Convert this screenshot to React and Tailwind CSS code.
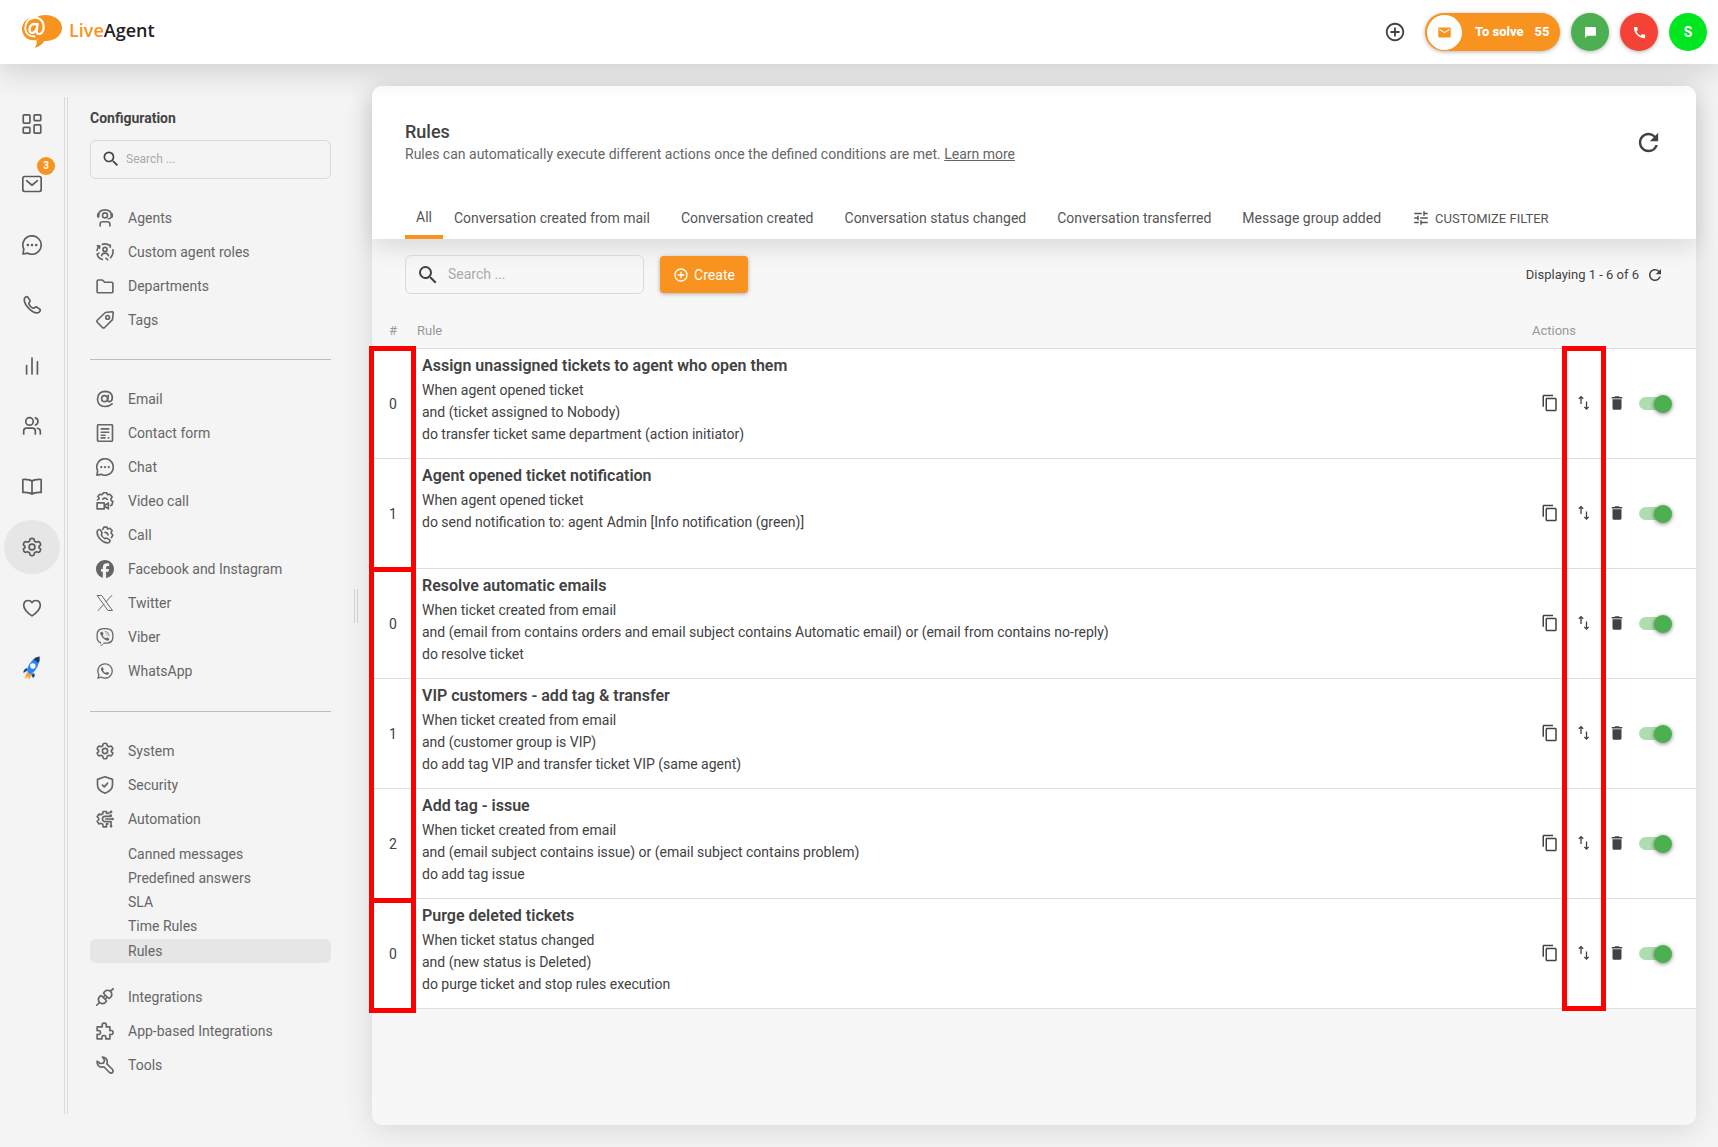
import React from 'react';
import { MdSearch, MdRefresh, MdTune, MdAddCircleOutline, MdContentCopy, MdDelete, MdEmail, MdChatBubble, MdCall } from 'react-icons/md';
import { FaFacebook, FaViber, FaWhatsapp } from 'react-icons/fa6';

const Svg = ({ size = 20, sw = 2, children }) => (
  <svg width={size} height={size} viewBox="0 0 24 24" fill="none" stroke="currentColor" strokeWidth={sw} strokeLinecap="round" strokeLinejoin="round" className="shrink-0" aria-hidden="true">
    {children}
  </svg>
);

const GEAR = 'M9.5 2.6Q12 .8 14.5 2.6L15 5 17.3 6.3 19.8 5.4Q22.3 6.6 22.4 9.4L20.4 11.2V12.8L22.4 14.6Q22.3 17.4 19.8 18.6L17.3 17.7 15 19 14.5 21.4Q12 23.2 9.5 21.4L9 19 6.7 17.7 4.2 18.6Q1.7 17.4 1.6 14.6L3.6 12.8V11.2L1.6 9.4Q1.7 6.6 4.2 5.4L6.7 6.3 9 5Z';

const Grid = (p) => (
  <Svg {...p}>
    <rect x="1.5" y="1" width="8" height="10" rx="1" />
    <rect x="14.5" y="1" width="8" height="7" rx="1" />
    <rect x="1.5" y="16" width="8" height="7" rx="1" />
    <rect x="14.5" y="13" width="8" height="10" rx="1" />
  </Svg>
);
const Mail = (p) => (
  <Svg {...p}>
    <rect x="1" y="3" width="22" height="18" rx="2" />
    <path d="M5.5 8L12 13.5 18.5 8" />
  </Svg>
);
const Chat = (p) => (
  <Svg {...p}>
    <path d="M1.2 22.8L2.2 17A11 11 0 1 1 7 21.8Z" />
    <path d="M7 12h.1M12 12h.1M17 12h.1" strokeWidth="3" />
  </Svg>
);
const Phone = (p) => (
  <Svg {...p}>
    <path d="M3.2 3.6Q5.2 1.2 7 2.6L9.6 6.6Q10 8 8.2 9.6 8 11.5 10.2 13.8 12.5 16 14.4 15.8 16 14 17.4 14.4L21.4 17Q22.8 18.8 20.4 20.8 16 23.4 9 17 1 9 3.2 3.6Z" />
  </Svg>
);
const Bars = (p) => (
  <Svg {...p}>
    <path d="M5.5 21.500V11.500M12 21.500V2.500M18.500 21.500V7" />
  </Svg>
);
const Users = (p) => (
  <Svg {...p}>
    <circle cx="9" cy="6.500" r="4.500" />
    <path d="M2 21.500V18Q2 14.500 5.500 14.500H12.500Q16 14.500 16 18V21.500M16 2.200A4.500 4.500 0 0 1 16 10.800M18.500 14.700Q22 15.200 22 18.500V21.500" />
  </Svg>
);
const Book = (p) => (
  <Svg {...p}>
    <path d="M12 5Q9 2.500 1 3V18.500Q9 18 12 20.500 15 18 23 18.500V3Q15 2.500 12 5V20.500" />
  </Svg>
);
const Gear = (p) => (
  <Svg {...p}>
    <path d={GEAR} />
    <circle cx="12" cy="12" r="3.500" />
  </Svg>
);
const Heart = (p) => (
  <Svg {...p}>
    <path d="M12 21.500Q2 15 2 8.500 2.500 3 7.500 3 10.500 3 12 5.500 13.500 3 16.500 3 21.500 3 22 8.500 22 15 12 21.500Z" />
  </Svg>
);
const Rocket = () => (
  <svg width="18" height="24" viewBox="0 0 18 24" aria-hidden="true">
    <path d="M3.500 12Q0 13.500 .5 17L4.500 14.500ZM11 17Q13 20 10 22L8 18.500Z" fill="#2b4a78" />
    <path d="M4 16L1.500 23 5 20.500 6 23.500 9 18Z" fill="#f9a13a" />
    <path d="M16.500 .5Q8 2 4 13L4.500 16 8 18.500Q16.500 12 16.500 .5Z" fill="#2684ff" />
    <path d="M16.500 .5Q13 1 10.500 3.500L16 7Q17 4 16.500 .5Z" fill="#253858" />
    <circle cx="9.800" cy="10" r="2.700" fill="#fff" />
  </svg>
);

const AgentIcon = (p) => (
  <Svg {...p}>
    <path d="M3 8.500Q4 1.200 12 1.200T21 8.500M5.500 22.500V20Q5.500 17 9 17H15Q18.500 17 18.500 20V22.500" />
    <path d="M3 7V10M21 7V10" strokeWidth="3.500" />
    <circle cx="12" cy="8.500" r="3.300" />
    <path d="M20.500 11Q19 13 16.500 13" />
  </Svg>
);
const RolesIcon = (p) => (
  <Svg {...p}>
    <circle cx="12" cy="8.500" r="2.700" />
    <path d="M7.500 17Q8 13.500 12 13.500T16.500 17M8.500 1.800Q14 0 18.500 3.500M22.500 9Q23.500 15 19.500 19.500M15.500 22.300L13.500 20.500M8.500 22Q3 20.500 1.500 15M1.300 10Q2 6 4.500 4M4.800 7V3.800H1.800M19 5.800V2.800M1.500 15L4 13.500" />
  </Svg>
);
const Folder = (p) => (
  <Svg {...p}>
    <path d="M1.500 5.500Q1.500 4 3 4H8.500L11.500 7H21Q22.500 7 22.500 8.500V19.500Q22.500 21 21 21H3Q1.500 21 1.500 19.500Z" />
  </Svg>
);
const Tag = (p) => (
  <Svg {...p}>
    <path d="M12.500 2L21.500 1Q23 1 23 2.500L22 11.500 11.500 22Q10 23.200 8.500 22L1.700 15Q.6 13.500 1.700 12.300Z" />
    <circle cx="15.500" cy="8.500" r="2.500" />
  </Svg>
);
const At = (p) => (
  <Svg {...p}>
    <circle cx="11.500" cy="11.500" r="4" />
    <path d="M16.500 7L15.500 13Q15.500 15.800 18 15.500 21.500 15 21.800 10.500 21.500 2 12.500 1.800 2.500 2 2 12 2 21.500 12 22 17.500 22 21.500 18.500" />
  </Svg>
);
const Form = (p) => (
  <Svg {...p}>
    <rect x="2" y="1" width="20" height="22" rx="1.500" />
    <path d="M7 6.500H17M7 11H17M7 15H12M7 18.500H12M16.500 18.500H17" />
  </Svg>
);
const VideoGear = (p) => (
  <Svg {...p}>
    <path d="M2 10.500L4 9.500V8L2.500 6 5 3 8 3.700 10 1H14L15.500 3.700 18.500 3 21.500 6.500 20 9V11L22.500 13 21 17.500 19.500 18M9 9.500Q12 6.500 15 10" />
    <path d="M1.500 14.500H11V22.500H1.500ZM11 18.500L16.500 14.500V22.500Z" />
  </Svg>
);
const CallGear = (p) => (
  <Svg {...p}>
    <path d="M2 6Q4.500 3.500 6 5.500L8 9Q8 10.500 7 11.500 8 15 12 17 13.500 15.500 15 16.500L18 18.500Q19.500 20 17.500 22 12 24 6 18 0 11.500 2 6Z" />
    <path d="M9 4.500L10.500 1.500H14.500L15.500 4 18.500 3 21.500 6 20 9 22.500 12.500 20.500 15.500M12 8.500Q15 8 16 12" />
  </Svg>
);
const XLogo = (p) => (
  <Svg {...p} sw={1.3}>
    <path d="M2 2H7.500L22 22H16.500ZM21 2L13.300 10.400M10.500 13.500L3 22" />
  </Svg>
);
const Shield = (p) => (
  <Svg {...p}>
    <path d="M12 1L22 4.500V12Q22 19.500 12 23 2 19.500 2 12V4.500ZM8.500 12L11 14.500 15.500 9.500" />
  </Svg>
);
const AutoIcon = (p) => (
  <Svg {...p}>
    <path d="M14 4.500V2H9.500L9 5 6.500 6.300 4 5.300 1.500 9 3.600 11V13L1.500 15 4 18.700 6.500 17.700 9 19 9.500 22.500H14V18.500H16M14 4.500H16.500L20 2.500M15 8.500H11Q8.500 9.500 8.500 12T11 15.500H15M13 12H22M15 8.500H19.500V7.500M15 15.500H20V21.500" />
    <path d="M20 2.500h.1M22 12h.1M20 21.500h.1M19.500 7.500h.1" strokeWidth="3.500" />
  </Svg>
);
const Plug = (p) => (
  <Svg {...p}>
    <path d="M1 23L5 19M4 18.500Q1.500 12.500 7 10L14 17Q11.500 22.500 5.500 20ZM23 1L19.500 4M10 7Q12.500 1.500 18 3.500L20.500 6Q22.500 11.500 17 14ZM9.500 12.500L12 10M12 15L14.500 12.500" />
  </Svg>
);
const Puzzle = (p) => (
  <Svg {...p}>
    <path d="M1.500 6.500H8.500Q7 1.500 11 1.500T13.500 6.500H18.500V11.500Q22.800 10.500 22.800 14T18.500 16.500V22.500H13Q14 18 10.500 18T8 22.500H1.500V16.500Q6 17.500 6 14T1.500 11.500Z" />
  </Svg>
);
const Wrench = (p) => (
  <Svg {...p}>
    <path d="M8.500 1.300L11.500 5.500 10 9.500 5.500 10 1.500 7Q1 12 4.500 14 7.500 15.500 10.500 14.300L18 22Q20 23.500 22 22 23.500 20 22 18L14.500 10.500Q16 6.500 13.500 3.500 11.500 1.200 8.500 1.300Z" />
  </Svg>
);

const SwapIcon = () => (
  <svg width="12" height="16" viewBox="0 0 12 16" fill="none" stroke="currentColor" strokeWidth="1.300" aria-hidden="true">
    <path d="M3 9V2M.8 3.800L3 1.600 5.200 3.800M8.500 6.500V14M6.300 11.900L8.500 14.100 10.700 11.900" />
  </svg>
);

const rail = [
  ['Dashboard', Grid],
  ['Tickets', Mail],
  ['Chats', Chat],
  ['Calls', Phone],
  ['Reports', Bars],
  ['Customers', Users],
  ['Knowledge base', Book],
  ['Configuration', Gear],
  ['Favourites', Heart],
  ['Getting started', Rocket],
];

const menu = [
  [
    ['Agents', AgentIcon],
    ['Custom agent roles', RolesIcon],
    ['Departments', Folder],
    ['Tags', Tag],
  ],
  [
    ['Email', At],
    ['Contact form', Form],
    ['Chat', Chat],
    ['Video call', VideoGear],
    ['Call', CallGear],
    ['Facebook and Instagram', FaFacebook],
    ['Twitter', XLogo],
    ['Viber', FaViber],
    ['WhatsApp', FaWhatsapp],
  ],
  [
    ['System', Gear],
    ['Security', Shield],
    ['Automation', AutoIcon, ['Canned messages', 'Predefined answers', 'SLA', 'Time Rules', 'Rules']],
    ['Integrations', Plug],
    ['App-based Integrations', Puzzle],
    ['Tools', Wrench],
  ],
];

const tabs = ['Conversation created from mail', 'Conversation created', 'Conversation status changed', 'Conversation transferred', 'Message group added'];

const rules = [
  [0, 'Assign unassigned tickets to agent who open them', ['When agent opened ticket', 'and (ticket assigned to Nobody)', 'do transfer ticket same department (action initiator)']],
  [1, 'Agent opened ticket notification', ['When agent opened ticket', 'do send notification to: agent Admin [Info notification (green)]']],
  [0, 'Resolve automatic emails', ['When ticket created from email', 'and (email from contains orders and email subject contains Automatic email) or (email from contains no-reply)', 'do resolve ticket']],
  [1, 'VIP customers - add tag & transfer', ['When ticket created from email', 'and (customer group is VIP)', 'do add tag VIP and transfer ticket VIP (same agent)']],
  [2, 'Add tag - issue', ['When ticket created from email', 'and (email subject contains issue) or (email subject contains problem)', 'do add tag issue']],
  [0, 'Purge deleted tickets', ['When ticket status changed', 'and (new status is Deleted)', 'do purge ticket and stop rules execution']],
];

function Logo() {
  return (
    <a href="#" className="flex items-center gap-[7px]" aria-label="LiveAgent">
      <svg width="40" height="34" viewBox="0 0 40 34" aria-hidden="true">
        <ellipse cx="23.500" cy="13" rx="16.500" ry="13" fill="#f7931e" />
        <circle cx="11.300" cy="14" r="11.300" fill="#f7931e" />
        <path d="M14 24L23 25Q20 31 12.500 33 15.500 29.500 14.500 24Z" fill="#f7931e" />
        <g fill="none" stroke="#fff" strokeLinecap="round">
          <path d="M10 3.200Q14 1.500 18 4.200 22.500 8 21.500 14 20.500 18.800 17 19 14.500 19 14.800 16L15.500 8.800" strokeWidth="2.200" />
          <path d="M10 3.200Q3.200 5.500 3.200 13.500 4 21.500 12.500 21.500" strokeWidth="1.800" />
          <path d="M15.300 9.500Q8 7.500 7.500 14.500 7.800 18.500 11 17.800 13.800 17 14.700 13" strokeWidth="2.400" />
        </g>
      </svg>
      <span className="pb-1 font-['Open_Sans','Noto_Sans',sans-serif] text-lg leading-6 font-semibold text-[#f7931e]">
        Live<span className="text-[#222]">Agent</span>
      </span>
    </a>
  );
}

function Header() {
  return (
    <header className="relative z-10 h-16 bg-white shadow-[0_8px_30px_rgba(0,0,0,0.15)] flex items-center justify-between pl-[22px] pr-[11px]">
      <Logo />
      <div className="flex items-center gap-[11px]">
        <button aria-label="Add" className="mr-2 text-[#424242]"><MdAddCircleOutline size={22} /></button>
        <button className="h-[38px] w-[135px] rounded-full bg-[#f7931e] flex items-center pl-0.5 text-white text-[13px] font-extrabold shadow-[0_1px_4px_rgba(0,0,0,0.3)]">
          <span className="w-[35px] h-[35px] rounded-full bg-white text-[#f7931e] flex items-center justify-center"><MdEmail size={15} /></span>
          <span className="ml-[13px]">To solve</span>
          <span className="ml-[11px]">55</span>
        </button>
        <button aria-label="Chats" className="w-[38px] h-[38px] rounded-full bg-[#4caf50] text-white flex items-center justify-center shadow-[0_1px_4px_rgba(0,0,0,0.3)]"><MdChatBubble size={13} /></button>
        <button aria-label="Calls" className="w-[38px] h-[38px] rounded-full bg-[#f44336] text-white flex items-center justify-center shadow-[0_1px_4px_rgba(0,0,0,0.3)]"><MdCall size={15} /></button>
        <button className="w-[38px] h-[38px] rounded-full bg-[#00e620] text-white text-sm font-bold">S</button>
      </div>
    </header>
  );
}

function Rail() {
  return (
    <nav className="w-[68px] shrink-0 border-r border-[#dadada] pr-0.5">
      <div className="h-full border-r border-[#dadada]">
        <ul className="h-[598px] flex flex-col items-center justify-between">
          {rail.map(([label, Icon]) => (
            <li key={label} className="relative">
              <a href="#" aria-label={label} className={'w-14 h-[54px] rounded-full flex items-center justify-center text-[#5c5c5c] ' + (label === 'Configuration' ? 'bg-[#e6e6e6]' : '')}>
                <Icon size={20} />
              </a>
              {label === 'Tickets' && (
                <span className="absolute top-0 right-[5px] w-[18px] h-[18px] rounded-full bg-[#f7931e] text-white text-[10px] leading-[18px] font-bold text-center">3</span>
              )}
            </li>
          ))}
        </ul>
      </div>
    </nav>
  );
}

function Sidebar() {
  return (
    <aside className="w-[241px] shrink-0 ml-[22px] text-sm text-[#666]">
      <h2 className="mt-2.5 leading-[22px] font-bold text-[#444]">Configuration</h2>
      <label className="mt-[11px] h-[39px] border border-[#d9d9d9] rounded-md flex items-center pl-2.5 pb-0.5 gap-[5px]">
        <MdSearch size={20} className="shrink-0 text-[#424242]" />
        <input type="text" placeholder="Search ..." aria-label="Search configuration" className="w-full text-xs outline-none placeholder:text-[#aaa]" />
      </label>
      {menu.map((group, i) => (
        <ul key={i} className={i === 0 ? 'mt-[22px]' : 'mt-[22px] pt-[22px] last:mt-[23px] border-t border-[#bdbdbd]'}>
          {group.map(([label, Icon, sub]) => (
            <li key={label}>
              <a href="#" className="h-[34px] flex items-center gap-3.5 pl-1.5">
                <Icon size={18} sw={2.2} />
                <span>{label}</span>
              </a>
              {sub && (
                <ul className="mt-1.5 mb-[17px]">
                  {sub.map((s) => (
                    <li key={s}>
                      <a href="#" className={'block h-6 leading-6 pl-[38px] rounded-md ' + (s === 'Rules' ? 'mt-px bg-[#e6e6e6]' : '')}>{s}</a>
                    </li>
                  ))}
                </ul>
              )}
            </li>
          ))}
        </ul>
      ))}
    </aside>
  );
}

function Toggle({ label }) {
  return (
    <label className="relative w-[33px] h-[18px] flex items-center">
      <input type="checkbox" defaultChecked aria-label={label} className="peer sr-only" />
      <span className="w-7 h-[13px] rounded-full bg-[#aeddb0]" />
      <span className="absolute right-0 w-[18px] h-[18px] rounded-full bg-[#4caf50] shadow-[0_1px_4px_rgba(0,0,0,0.5)]" />
    </label>
  );
}

function RuleRow({ rule }) {
  const [order, title, lines] = rule;
  return (
    <tr className="h-[110px] bg-white border-b border-[#dedede] text-sm text-[#424242]">
      <td className="pt-0.5 text-center">{order}</td>
      <td className="align-top pl-2 pt-1.5">
        <h3 className="text-base leading-[22px] font-semibold">{title}</h3>
        <div className="mt-0.5 leading-[22px]">
          {lines.map((l) => <p key={l}>{l}</p>)}
        </div>
      </td>
      <td className="pr-6 pt-px">
        <div className="flex items-center justify-end">
          <button aria-label="Copy" className="w-[34px] pb-0.5 flex justify-center"><MdContentCopy size={18} /></button>
          <button aria-label="Move" className="w-[34px] pb-0.5 flex justify-center"><SwapIcon /></button>
          <button aria-label="Delete" className="w-8 mr-1.5 pb-0.5 flex justify-center"><MdDelete size={18} /></button>
          <Toggle label={title} />
        </div>
      </td>
    </tr>
  );
}

function RulesPage() {
  return (
    <main className="flex-1 min-w-0 min-h-[1039px] mb-[22px] bg-[#f7f7f7] rounded-[10px] shadow-[0_4px_30px_rgba(0,0,0,0.12)]">
      <div className="h-[153px] bg-white rounded-t-[10px] shadow-[0_8px_24px_rgba(0,0,0,0.12)] px-[33px] flex flex-col justify-between">
        <div className="pt-[34px] flex justify-between items-start">
          <div>
            <h1 className="text-lg leading-6 font-medium text-[#424242]">Rules</h1>
            <p className="text-sm leading-5 text-[#666]">
              Rules can automatically execute different actions once the defined conditions are met. <a href="#" className="underline">Learn more</a>
            </p>
          </div>
          <button aria-label="Refresh" className="mt-2 text-[#424242]"><MdRefresh size={29} /></button>
        </div>
        <div className="flex items-end text-sm text-[#555]">
          <button className="h-10 px-[11px] border-b-4 border-[#f7931e]">All</button>
          {tabs.map((t, i) => (
            <button key={t} className={'h-[42px] ' + (i === 0 ? 'ml-[11px]' : 'ml-[31px]')}>{t}</button>
          ))}
          <button className="ml-[31px] h-[42px] flex items-center gap-[5px] text-[13px]">
            <MdTune size={18} />
            <span className="pt-0.5">CUSTOMIZE FILTER</span>
          </button>
        </div>
      </div>

      <div className="pt-4 pl-[33px] pr-8 flex items-center text-sm">
        <label className="w-[239px] h-[39px] border border-[#d9d9d9] rounded-md flex items-center pl-2.5 gap-2">
          <MdSearch size={24} className="shrink-0 text-[#424242]" />
          <input type="text" placeholder="Search ..." aria-label="Search rules" className="w-full pb-0.5 outline-none placeholder:text-[#aaa]" />
        </label>
        <button className="ml-4 h-[37px] w-[88px] rounded bg-[#f7931e] text-white flex items-center justify-center gap-[5px] shadow-[0_1px_4px_rgba(0,0,0,0.3)]">
          <MdAddCircleOutline size={16} />
          Create
        </button>
        <div className="ml-auto flex items-center gap-[7px] text-[13px] text-[#424242]">
          <span className="pt-0.5">Displaying 1 - 6 of 6</span>
          <button aria-label="Reload list"><MdRefresh size={18} /></button>
        </div>
      </div>

      <div className="relative mt-5">
        <table className="w-full border-collapse">
          <thead>
            <tr className="h-[34px] border-b border-[#dedede] text-[13px] text-[#999]">
              <th className="w-[42px] font-normal">#</th>
              <th className="pl-[3px] text-left font-normal">Rule</th>
              <th className="w-[200px] pl-9 text-left font-normal">Actions</th>
            </tr>
          </thead>
          <tbody>
            {rules.map((r) => <RuleRow key={r[1]} rule={r} />)}
          </tbody>
        </table>
        {/* highlight frames over the order column and the move buttons */}
        <div className="absolute -left-[3px] top-8 w-[47px] h-[226px] border-5 border-[#f00]" />
        <div className="absolute -left-[3px] top-[253px] w-[47px] h-[336px] border-5 border-[#f00]" />
        <div className="absolute -left-[3px] top-[584px] w-[47px] h-[115px] border-5 border-[#f00]" />
        <div className="absolute right-[90px] top-8 w-[44px] h-[665px] border-5 border-[#f00]" />
      </div>
    </main>
  );
}

export default function App() {
  return (
    <div className="min-h-screen bg-[#f4f4f4] font-[Roboto,sans-serif]">
      <Header />
      <div className="flex pt-[22px] pr-[22px]">
        <div className="flex mt-[11px] mb-[33px]">
          <Rail />
          <Sidebar />
        </div>
        <div className="w-[41px] shrink-0 flex items-center justify-end pr-3.5 pb-[22px]">
          <div className="w-1 h-[34px] border-x border-[#d4d4d4]" />
        </div>
        <RulesPage />
      </div>
    </div>
  );
}
